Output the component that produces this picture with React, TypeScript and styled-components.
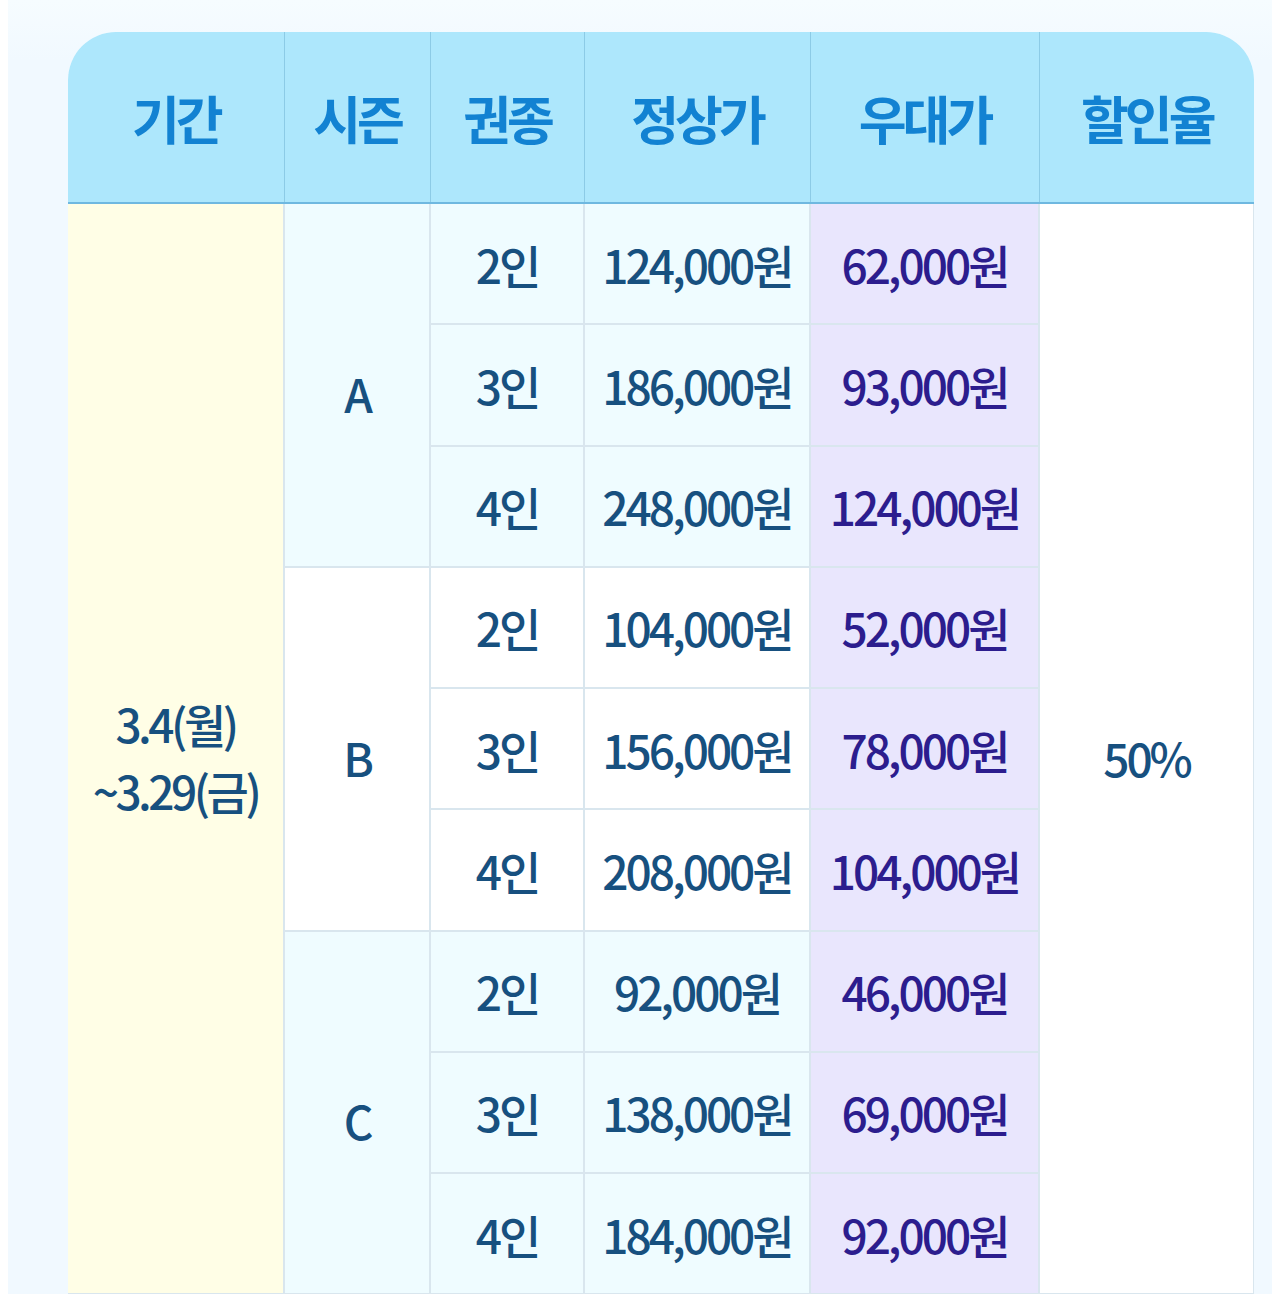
import * as React from 'react';
import styled, { createGlobalStyle } from 'styled-components';

type Tone = 'yellow' | 'cyan' | 'white' | 'lavender';

interface IPriceRow {
	ticket: string;
	regular: string;
	special: string;
}

interface ISeason {
	name: string;
	tone: Tone;
	rows: Array<IPriceRow>;
}

const GlobalStyle = createGlobalStyle`
	html, body {
		margin: 0;
		padding: 0;
		background: #ffffff;
	}
	body {
		font-family: "Noto Sans CJK KR", "Noto Sans", sans-serif;
	}
`;

const toneColors: Record<Tone, string> = {
	yellow: '#fffee6',
	cyan: '#effcff',
	white: '#ffffff',
	lavender: '#e9e6fd',
};

const Page = styled.div`
	margin-left: 8px;
	min-height: 1294px;
	box-sizing: border-box;
	padding: 32px 18px 0 60px;
	background: linear-gradient(180deg, #f6fcff 0px, #f1f9ff 60px);
	overflow: hidden;
`;

const TableWrap = styled.div`
	width: 1186px;
	border-radius: 48px 48px 0 0;
	overflow: hidden;
	background: #ffffff;
`;

const Table = styled.table`
	width: 100%;
	border-collapse: collapse;
	table-layout: fixed;
`;

const HeadCell = styled.th`
	height: 170px;
	padding: 0;
	background: #ade7fc;
	color: #1282d2;
	font-size: 52px;
	font-weight: 700;
	letter-spacing: -4px;
	text-align: center;
	vertical-align: middle;
	border-left: 1px solid #8ccbe6;
	border-bottom: 2px solid #6fb8e0;
	&:first-child {
		border-left: none;
	}
`;

const Cell = styled.td<{ $tone: Tone; $special?: boolean; $spanned?: boolean }>`
	height: 119.25px;
	padding: ${(p) => (p.$spanned ? '16px 0 0' : '0')};
	background: ${(p) => toneColors[p.$tone]};
	color: ${(p) => (p.$special ? '#2c1d8e' : '#17507f')};
	font-size: 46px;
	font-weight: 500;
	letter-spacing: -3px;
	line-height: 1;
	text-align: center;
	vertical-align: middle;
	white-space: nowrap;
	border: 2px solid #d9e6ee;
	&:first-child {
		border-left: none;
	}
`;

const PeriodText = styled.div`
	line-height: 67px;
	letter-spacing: -3.5px;
`;

const seasons: Array<ISeason> = [
	{
		name: 'A',
		tone: 'cyan',
		rows: [
			{ ticket: '2인', regular: '124,000원', special: '62,000원' },
			{ ticket: '3인', regular: '186,000원', special: '93,000원' },
			{ ticket: '4인', regular: '248,000원', special: '124,000원' },
		],
	},
	{
		name: 'B',
		tone: 'white',
		rows: [
			{ ticket: '2인', regular: '104,000원', special: '52,000원' },
			{ ticket: '3인', regular: '156,000원', special: '78,000원' },
			{ ticket: '4인', regular: '208,000원', special: '104,000원' },
		],
	},
	{
		name: 'C',
		tone: 'cyan',
		rows: [
			{ ticket: '2인', regular: '92,000원', special: '46,000원' },
			{ ticket: '3인', regular: '138,000원', special: '69,000원' },
			{ ticket: '4인', regular: '184,000원', special: '92,000원' },
		],
	},
];

const columns = [216, 146, 154, 226, 229, 215];
const headers = ['기간', '시즌', '권종', '정상가', '우대가', '할인율'];

const totalRows = seasons.reduce((sum, s) => sum + s.rows.length, 0);

export default function App() {
	return (
		<>
			<GlobalStyle />
			<Page>
				<TableWrap>
					<Table>
						<colgroup>
							{columns.map((w, idx) => <col key={idx} style={{ width: w }} />)}
						</colgroup>
						<thead>
							<tr>
								{headers.map((h) => <HeadCell key={h}>{h}</HeadCell>)}
							</tr>
						</thead>
						<tbody>
							{seasons.map((season, sIdx) =>
								season.rows.map((row, rIdx) => (
									<tr key={`${season.name}-${rIdx}`}>
										{sIdx === 0 && rIdx === 0 &&
											<Cell $tone="yellow" $spanned rowSpan={totalRows}>
												<PeriodText>3.4(월)<br />~3.29(금)</PeriodText>
											</Cell>
										}
										{rIdx === 0 &&
											<Cell $tone={season.tone} $spanned rowSpan={season.rows.length}>{season.name}</Cell>
										}
										<Cell $tone={season.tone}>{row.ticket}</Cell>
										<Cell $tone={season.tone}>{row.regular}</Cell>
										<Cell $tone="lavender" $special>{row.special}</Cell>
										{sIdx === 0 && rIdx === 0 &&
											<Cell $tone="white" $spanned rowSpan={totalRows}>50%</Cell>
										}
									</tr>
								))
							)}
						</tbody>
					</Table>
				</TableWrap>
			</Page>
		</>
	);
}
